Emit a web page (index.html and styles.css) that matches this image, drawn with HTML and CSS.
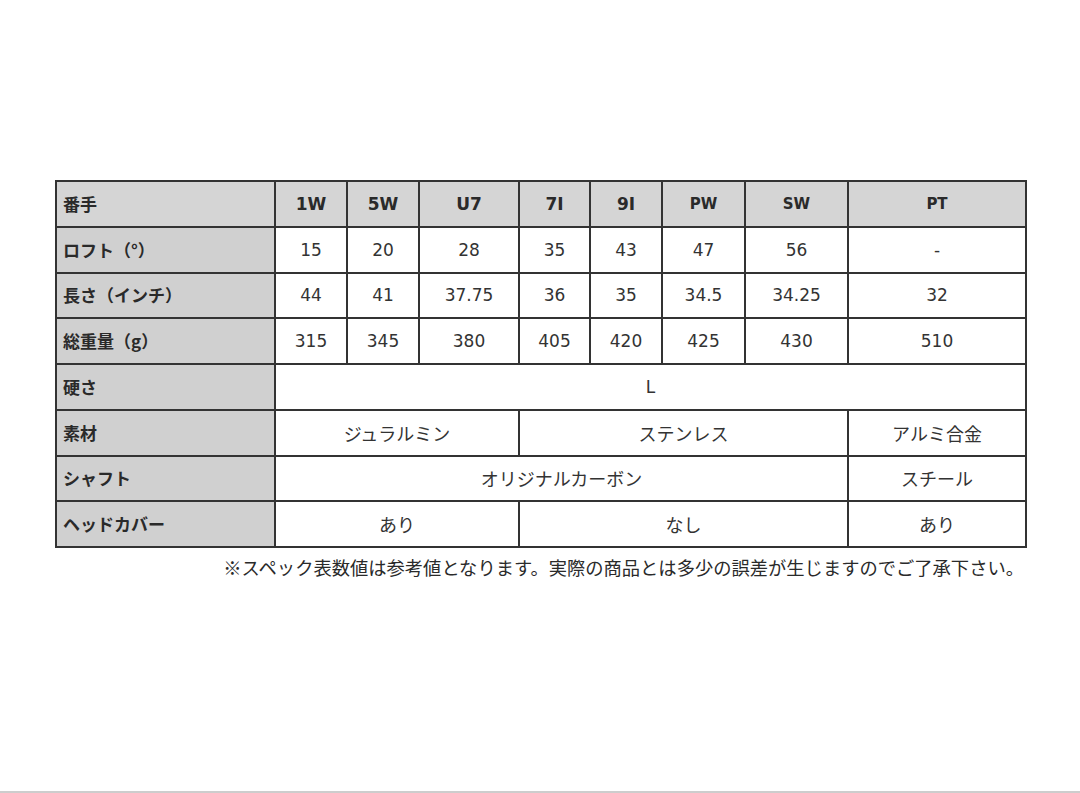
FILE: index.html
```html
<!DOCTYPE html>
<html lang="ja">
<head>
<meta charset="utf-8">
<link rel="stylesheet" href="styles.css">
</head>
<body>
<div class="page">
  <div class="sheet">
    <table class="spec">
      <colgroup>
        <col class="c-label"><col class="c-1w"><col class="c-5w"><col class="c-u7"><col class="c-7i"><col class="c-9i"><col class="c-pw"><col class="c-sw"><col class="c-pt">
      </colgroup>
      <tr class="head">
        <th class="label">番手</th>
        <th class="num">1W</th><th class="num">5W</th><th class="num">U7</th><th class="num">7I</th><th class="num">9I</th><th class="small">PW</th><th class="small">SW</th><th class="small">PT</th>
      </tr>
      <tr>
        <th class="label">ロフト（°）</th>
        <td>15</td><td>20</td><td>28</td><td>35</td><td>43</td><td>47</td><td>56</td><td>-</td>
      </tr>
      <tr>
        <th class="label">長さ（インチ）</th>
        <td>44</td><td>41</td><td>37.75</td><td>36</td><td>35</td><td>34.5</td><td>34.25</td><td>32</td>
      </tr>
      <tr>
        <th class="label">総重量（g）</th>
        <td>315</td><td>345</td><td>380</td><td>405</td><td>420</td><td>425</td><td>430</td><td>510</td>
      </tr>
      <tr>
        <th class="label">硬さ</th>
        <td colspan="8">L</td>
      </tr>
      <tr>
        <th class="label">素材</th>
        <td colspan="3" class="jp">ジュラルミン</td><td colspan="4" class="jp">ステンレス</td><td class="jp">アルミ合金</td>
      </tr>
      <tr>
        <th class="label">シャフト</th>
        <td colspan="7" class="jp">オリジナルカーボン</td><td class="jp">スチール</td>
      </tr>
      <tr>
        <th class="label">ヘッドカバー</th>
        <td colspan="3" class="jp">あり</td><td colspan="4" class="jp">なし</td><td class="jp">あり</td>
      </tr>
    </table>
    <p class="note">※スペック表数値は参考値となります。実際の商品とは多少の誤差が生じますのでご了承下さい。</p>
  </div>
</div>
</body>
</html>
```

FILE: styles.css
```css
html, body {
  margin: 0;
  padding: 0;
  background: #ffffff;
}

.page {
  height: 791px;
  border-bottom: 2px solid #cdcdcd;
  box-sizing: content-box;
  overflow: hidden;
}

.sheet {
  width: 970px;
  margin-left: 55px;
  padding-top: 180px;
}

.spec {
  border-collapse: collapse;
  table-layout: fixed;
  width: 970px;
  border: 2px solid #2e2e2e;
  font-family: "DejaVu Sans", "Noto Sans CJK JP", sans-serif;
  color: #2a2a2a;
}

.c-label { width: 219px; }
.c-1w { width: 72px; }
.c-5w { width: 72px; }
.c-u7 { width: 100px; }
.c-7i { width: 71px; }
.c-9i { width: 72px; }
.c-pw { width: 83px; }
.c-sw { width: 103px; }
.c-pt { width: 178px; }

.spec tr {
  height: 45.75px;
}

.spec th,
.spec td {
  border: 2px solid #333333;
  padding: 0;
  text-align: center;
  vertical-align: middle;
  font-size: 17px;
  font-weight: normal;
  line-height: 20px;
}

.spec td {
  background: #ffffff;
  color: #333333;
}

.spec tr.head th {
  background: #d5d5d5;
  font-weight: bold;
  color: #2a2a2a;
}

.spec tr.head th.num {
  font-family: "DejaVu Sans", sans-serif;
  font-size: 17px;
}

.spec tr.head th.small {
  font-family: "DejaVu Sans", sans-serif;
  font-size: 15px;
}

.spec th.label {
  background: #d0d0d0;
  text-align: left;
  padding-left: 6px;
  font-family: "Noto Sans CJK JP", sans-serif;
  font-size: 17px;
  font-weight: bold;
  color: #2a2a2a;
}

.spec td.jp {
  font-family: "Noto Sans CJK JP", sans-serif;
  font-size: 18px;
}

.note {
  margin: 4px 1px 0 0;
  text-align: right;
  font-family: "Noto Sans CJK JP", sans-serif;
  font-size: 18.3px;
  line-height: 30px;
  color: #2a2a2a;
  letter-spacing: 0;
}
```
